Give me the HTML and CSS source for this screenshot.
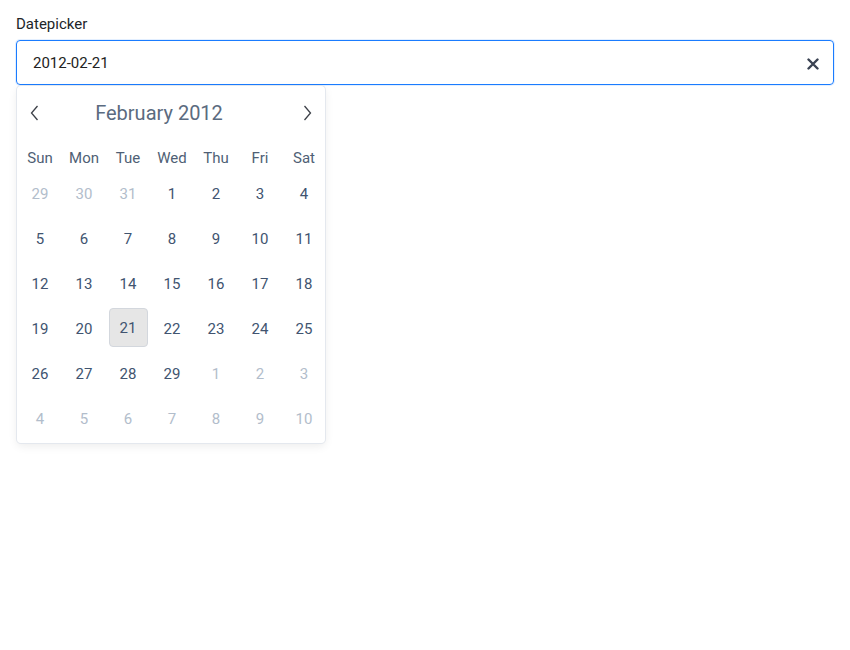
FILE: index.html
```html
<!DOCTYPE html>
<html>
<head>
<meta charset="utf-8">
<link rel="stylesheet" href="styles.css">
</head>
<body>
<div class="field">
  <label class="label">Datepicker</label>
  <div class="input">
    <span class="value">2012-02-21</span>
    <svg class="clear" width="12" height="12" viewBox="0 0 12 12"><path d="M1.5 1.5 L10.5 10.5 M10.5 1.5 L1.5 10.5" stroke="#3a4252" stroke-width="2.4" stroke-linecap="round"/></svg>
  </div>
  <div class="calendar">
    <div class="cal-head">
      <span class="nav"><svg width="9" height="16" viewBox="0 0 9 16"><path d="M7.5 1 L1.5 8 L7.5 15" fill="none" stroke="#3c4048" stroke-width="1.3"/></svg></span>
      <span class="title">February 2012</span>
      <span class="nav"><svg width="9" height="16" viewBox="0 0 9 16"><path d="M1.5 1 L7.5 8 L1.5 15" fill="none" stroke="#3c4048" stroke-width="1.3"/></svg></span>
    </div>
    <div class="weekdays">
      <span>Sun</span><span>Mon</span><span>Tue</span><span>Wed</span><span>Thu</span><span>Fri</span><span>Sat</span>
    </div>
    <div class="days">
      <span class="day muted">29</span><span class="day muted">30</span><span class="day muted">31</span><span class="day">1</span><span class="day">2</span><span class="day">3</span><span class="day">4</span>
      <span class="day">5</span><span class="day">6</span><span class="day">7</span><span class="day">8</span><span class="day">9</span><span class="day">10</span><span class="day">11</span>
      <span class="day">12</span><span class="day">13</span><span class="day">14</span><span class="day">15</span><span class="day">16</span><span class="day">17</span><span class="day">18</span>
      <span class="day">19</span><span class="day">20</span><span class="day selected">21</span><span class="day">22</span><span class="day">23</span><span class="day">24</span><span class="day">25</span>
      <span class="day">26</span><span class="day">27</span><span class="day">28</span><span class="day">29</span><span class="day muted">1</span><span class="day muted">2</span><span class="day muted">3</span>
      <span class="day muted">4</span><span class="day muted">5</span><span class="day muted">6</span><span class="day muted">7</span><span class="day muted">8</span><span class="day muted">9</span><span class="day muted">10</span>
    </div>
  </div>
</div>
</body>
</html>
```

FILE: styles.css
```css
* { box-sizing: border-box; }
html, body {
  margin: 0;
  background: #fff;
  font-family: Roboto, "Liberation Sans", sans-serif;
}
body {
  min-height: 650px;
}
.field {
  padding: 14px 16px;
}
.label {
  display: block;
  font-size: 15px;
  line-height: 20px;
  color: #212529;
  margin-bottom: 6px;
}
.input {
  height: 45px;
  border: 1px solid #1a7cff;
  border-radius: 4px;
  display: flex;
  align-items: center;
  justify-content: space-between;
  padding: 0 14px 0 16px;
  box-shadow: 0 0 0 1px rgba(26,124,255,0.12);
}
.value {
  font-size: 15px;
  color: #222;
}
.clear {
  margin-top: 2px;
}
.calendar {
  margin: 1px 0 0 1px;
  width: 308px;
  background: #fff;
  border-radius: 4px;
  box-shadow: 1px 0 0 #e4e8ee, -1px 0 0 #e4e8ee, 0 1px 0 #e4e8ee, 0 -1px 0 #e4e8ee, 0 3px 10px rgba(0,0,0,0.08);
  padding-bottom: 2px;
}
.cal-head {
  height: 54px;
  display: grid;
  grid-template-columns: 34px 1fr 36px;
  align-items: center;
}
.nav {
  display: flex;
  justify-content: center;
  align-items: center;
  height: 20px;
}
.title {
  text-align: center;
  font-size: 20px;
  color: #5b6b80;
  padding-right: 22px;
}
.weekdays {
  height: 31px;
  padding: 8px 0 0 1px;
  display: grid;
  grid-template-columns: repeat(7, 44px);
}
.weekdays span {
  text-align: center;
  font-size: 15px;
  line-height: 20px;
  color: #4f5f75;
}
.days {
  display: grid;
  padding-left: 1px;
  grid-template-columns: repeat(7, 44px);
  grid-auto-rows: 45px;
}
.day {
  justify-self: center;
  align-self: center;
  width: 39px;
  height: 39px;
  line-height: 39px;
  text-align: center;
  font-size: 15px;
  color: #415470;
  border: 1px solid transparent;
  border-radius: 4px;
}
.day.muted {
  color: #b2bdcb;
}
.day.selected {
  background: #e6e6e6;
  border-color: #d3d7dd;
  margin-top: -3px;
}
```
